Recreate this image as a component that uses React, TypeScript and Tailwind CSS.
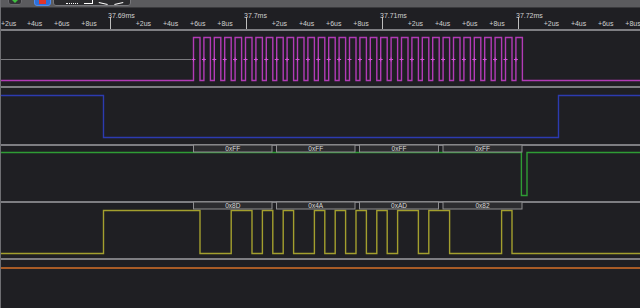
import React from 'react';

const PERIOD = 10.4;
const RISE0 = 192.5;
const HIGH_W = 6.5;
const rise = (n: number) => RISE0 + n * PERIOD;
const fall = (n: number) => rise(n) + HIGH_W;

const BYTES_MOSI = [0x8d, 0x4a, 0xad, 0x82];
const LABELS_MOSI = ['0x8D', '0x4A', '0xAD', '0x82'];
const LABELS_MISO = ['0xFF', '0xFF', '0xFF', '0xFF'];

const toBits = (bytes: number[]) =>
  bytes.flatMap((b) => [7, 6, 5, 4, 3, 2, 1, 0].map((i) => (b >> i) & 1));

function clockPath(hi: number, lo: number) {
  let d = `M0 ${lo} H${rise(0)}`;
  for (let n = 0; n < 32; n++) {
    d += ` V${hi} H${fall(n)} V${lo}`;
    if (n < 31) d += ` H${rise(n + 1)}`;
  }
  return d + ' H640';
}

// data changes on the falling clock edge, bit k valid around rise(k)
function dataPath(bits: number[], hi: number, lo: number, csX: number, tail: number) {
  const y = (b: number) => (b ? hi : lo);
  let d = `M0 ${lo} H${csX} V${y(bits[0])}`;
  let cur = bits[0];
  for (let k = 1; k < bits.length; k++) {
    if (bits[k] !== cur) {
      d += ` H${fall(k - 1)} V${y(bits[k])}`;
      cur = bits[k];
    }
  }
  if (cur !== tail) d += ` H${fall(bits.length - 1)} V${y(tail)}`;
  return d + ' H640';
}

const bubbleX = [
  [192.5, 271],
  [275.5, 354],
  [358.5, 437.5],
  [442, 521],
];

function Bubbles({ labels }: { labels: string[] }) {
  return (
    <g>
      {bubbleX.map(([a, b], i) => (
        <g key={i}>
          <rect x={a} y={-1} width={b - a} height={7} fill="#2c2c2f" stroke="#8e8e90" strokeWidth={1} />
          <text x={(a + b) / 2} y={4.6} textAnchor="middle" fontSize={6.5} fill="#d8d8d8" fontFamily="Liberation Sans, Arial, sans-serif">
            {labels[i]}
          </text>
        </g>
      ))}
    </g>
  );
}

function Ruler() {
  const majors = [
    { x: 109, name: '37.69ms' },
    { x: 245, name: '37.7ms' },
    { x: 381, name: '37.71ms' },
    { x: 517, name: '37.72ms' },
  ];
  const minors: { x: number; t: string }[] = [{ x: 1, t: '+2us' }];
  [-27, 109, 245, 381, 517].forEach((m) => {
    [1, 2, 3, 4].forEach((j) => {
      const x = m + 27.2 * j;
      if (x > 5 && x < 630) minors.push({ x, t: `+${2 * j}us` });
    });
  });
  return (
    <svg width={640} height={21} className="block">
      {majors.map((m) => (
        <g key={m.x}>
          <line x1={m.x + 0.5} y1={9} x2={m.x + 0.5} y2={21} stroke="#bdbdbd" strokeWidth={1} />
          <text x={m.x - 2} y={10} fontSize={7} fill="#d0d0d0" fontFamily="Liberation Sans, Arial, sans-serif">
            {m.name}
          </text>
        </g>
      ))}
      {minors.map((m, i) => (
        <text key={i} x={Math.max(0, m.x - 1.5)} y={17.5} fontSize={7} fill="#cfcfcf" fontFamily="Liberation Sans, Arial, sans-serif">
          {m.t}
        </text>
      ))}
    </svg>
  );
}

function Channel({ h, children }: { h: string; children: React.ReactNode }) {
  return (
    <div className={`${h} border-t-2 border-[#7e7e82]`}>
      <svg width={640} height={56} className="block overflow-visible" fill="none">
        {children}
      </svg>
    </div>
  );
}

export default function App() {
  const mosi = toBits(BYTES_MOSI);
  return (
    <div className="w-[640px] h-[308px] overflow-hidden bg-[#1f1f23] border-l border-[#6e6e72] flex flex-col font-['Liberation_Sans',Arial,sans-serif]">
      {/* toolbar, mostly scrolled out of view */}
      <div className="h-[8px] bg-[#5b5b5e] border-b border-[#3a3a3d] flex items-end gap-[12px] pl-[7px] overflow-hidden">
        <div className="w-[14px] h-[14px] mb-[2px] rounded-[3px] bg-[#333336] border border-[#6a6a6e] flex items-end justify-center">
          <div className="w-0 h-0 mb-[1px] border-l-[4px] border-r-[4px] border-t-[4px] border-l-transparent border-r-transparent border-t-[#3fbf3f]" />
        </div>
        <div className="w-[17px] h-[14px] mb-[1px] rounded-[3px] bg-[#2f6fd6] border border-[#4d8cf0] flex items-end justify-center">
          <div className="w-[7px] h-[4px] mb-[1px] bg-[#e0352b]" />
        </div>
        <div className="w-[78px] h-[14px] mb-[1px] -ml-[10px] rounded-[3px] bg-[#2b2b2e] border border-[#77777b] flex items-end gap-[6px] pl-[12px] pb-[1px]">
          <div className="w-[12px] h-[4px] border-b border-dotted border-white" />
          <div className="w-[9px] h-[4px] border-b border-r border-white" />
          <div className="w-[9px] h-[4px] border-b border-white rotate-12" />
          <div className="w-[9px] h-[4px] border-b border-white -rotate-12" />
        </div>
      </div>

      <Ruler />

      {/* channel 0: clock */}
      <Channel h="h-[57px]">
        <line x1={0} y1={28.5} x2={190} y2={28.5} stroke="#7a7a7e" strokeWidth={1} />
        <path d={clockPath(6.5, 49.5)} stroke="#b23bb6" strokeWidth={1.4} />
        {Array.from({ length: 32 }, (_, n) => (
          <path key={n} d={`M${rise(n) - 2} 28.5 H${rise(n) + 2} M${rise(n)} 26.5 V30.5`} stroke="#d24fd6" strokeWidth={1} />
        ))}
      </Channel>

      {/* channel 1: chip select */}
      <Channel h="h-[58px]">
        <path d="M0 7.5 H102.5 V49.5 H557.5 V7.5 H640" stroke="#2c3bb0" strokeWidth={1.4} />
      </Channel>

      {/* channel 2: MISO */}
      <Channel h="h-[57px]">
        <path d={`M0 6.5 H${fall(31) - 1} V49.5 H526 V6.5 H640`} stroke="#2f9c35" strokeWidth={1.4} />
        <Bubbles labels={LABELS_MISO} />
      </Channel>

      {/* channel 3: MOSI */}
      <Channel h="h-[57px]">
        <path d={dataPath(mosi, 7.5, 50.5, 102.5, 0)} stroke="#a39f2e" strokeWidth={1.4} />
        <Bubbles labels={LABELS_MOSI} />
      </Channel>

      <div className="border-t-2 border-[#7e7e82] pt-[7px]">
        <div className="h-[1.5px] bg-[#a85b26]" />
      </div>
    </div>
  );
}
